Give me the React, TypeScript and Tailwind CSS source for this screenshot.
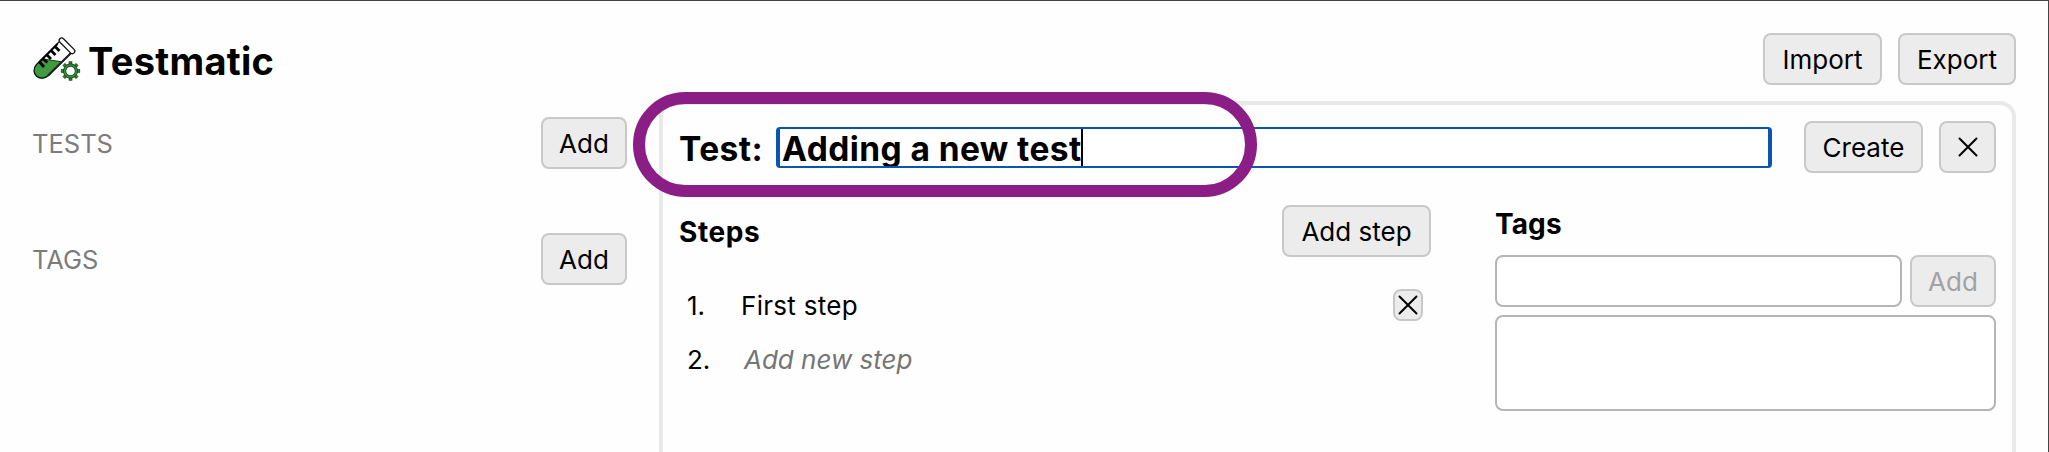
import React from "react";

const buttonBase =
  "flex h-[52px] shrink-0 items-center justify-center rounded-[8px] border-2 border-[#c8c8c8] bg-[#ececec] text-[26px] leading-none";

function Button({ className = "", children }: { className?: string; children: React.ReactNode }) {
  return <button className={`${buttonBase} ${className}`}>{children}</button>;
}

function Cross() {
  return (
    <svg className="size-[20px]" viewBox="0 0 20 20" fill="none" stroke="currentColor" strokeWidth="2" strokeLinecap="round">
      <path d="M1.5 1.5l17 17M18.5 1.5l-17 17" />
    </svg>
  );
}

function Logo() {
  return (
    <svg className="h-[44px] w-[48px] shrink-0" viewBox="0 0 48 44">
      <path d="M26 5L3.500 27.500C-4 36 8 47 16 39L39 15Z" fill="#fff" />
      <path d="M10 22l6 .8 12 2L16 38.500C8 47-4 37 3 28.500z" fill="#3f9b40" />
      <path d="M26 5L3.500 27.500C-4 36 7 46 15.500 38.500L38.500 15.500" fill="none" stroke="#111" strokeWidth="1.300" />
      <path d="M15 38.500L38 16" stroke="#222" strokeWidth="2" />
      <path d="M10.500 22l18 2.800" stroke="#17401a" strokeWidth="1" />
      <path d="M22.500 10l4 4M18 13.500l4.500 4.500M14 18l4 4M10 22l4.500 3.500M6.500 25l4.500 5" stroke="#000" strokeWidth="2.800" />
      <path d="M24.500 7L6 25.500" stroke="#000" strokeWidth="2" />
      <rect x="24" y="6.300" width="20" height="5" rx="2.500" transform="rotate(45 34 8.800)" fill="#fff" stroke="#111" strokeWidth="1.300" />
      <g transform="translate(37.500 34)">
        {[0, 45, 90, 135, 180, 225, 270, 315].map((a) => (
          <rect key={a} x="-1.500" y="-9.300" width="3" height="4" transform={`rotate(${a})`} fill="#2c7a30" stroke="#173f19" strokeWidth=".6" />
        ))}
        <circle r="5.900" fill="#fff" stroke="#173f19" strokeWidth="3.200" />
        <circle r="5.900" fill="none" stroke="#359139" strokeWidth="1.800" />
      </g>
    </svg>
  );
}

export default function App() {
  return (
    <div className="relative flex h-[452px] w-[2049px] flex-col overflow-hidden border-t border-r border-[#444] bg-[#fefefe] pl-[33px] pr-[32px] font-['Inter',sans-serif] text-[26px] text-black">
      <header className="flex h-[100px] shrink-0 justify-between pt-[32px]">
        <div className="flex h-[52px] items-center">
          <div className="flex h-[44px] items-center"><Logo /></div>
          <h1 className="ml-[7px] pt-[3px] text-[38px] leading-[44px] font-bold tracking-[0.3px]">Testmatic</h1>
        </div>
        <div className="flex gap-[16px]">
          <Button className="w-[119px] pt-[2px]">Import</Button>
          <Button className="w-[118px] pt-[2px]">Export</Button>
        </div>
      </header>

      <div className="flex min-h-0 flex-1">
        <aside className="flex w-[594px] shrink-0 flex-col gap-[64px] pt-[16px]">
          <div className="flex h-[52px] items-center justify-between text-[#7c7c7c]">
            <h2 className="-ml-px pt-[2px] text-[25.5px]">TESTS</h2>
            <Button className="w-[86px] pt-[2px] text-black">Add</Button>
          </div>
          <div className="flex h-[52px] items-center justify-between text-[#7c7c7c]">
            <h2 className="-ml-px pt-[2px] text-[25.5px]">TAGS</h2>
            <Button className="w-[86px] pt-[2px] text-black">Add</Button>
          </div>
        </aside>

        <main className="ml-[32px] flex min-w-0 flex-1 flex-col rounded-t-[16px] border-x-4 border-t-4 border-[#e9e9e9] px-[16px] pt-[16px]">
          <div className="flex h-[52px] shrink-0 items-center text-[33.5px] leading-none font-bold tracking-[0.42px]">
            <label className="w-[97px] pt-[5px]">Test:</label>
            <div className="mt-[1px] flex h-[41px] w-[996px] items-center overflow-hidden rounded-[4px] border-x-4 border-y-2 border-[#0a54b4] bg-white pl-[2px]">
              <span className="whitespace-nowrap pt-[5px]">Adding a new test</span>
              <span className="-ml-px h-[37px] w-[2px] bg-black" />
            </div>
            <Button className="ml-[32px] w-[119px] pt-[2px] font-normal tracking-normal">Create</Button>
            <Button className="ml-[16px] w-[57px]"><Cross /></Button>
          </div>

          <div className="mt-[32px] flex">
            <section className="w-[752px]">
              <div className="flex h-[52px] items-center justify-between">
                <h3 className="pt-[2px] text-[28px] font-bold tracking-[0.6px]">Steps</h3>
                <Button className="w-[149px] pt-[2px]">Add step</Button>
              </div>
              <ol className="mt-[21px] px-[8px]">
                <li className="flex h-[54px] items-center">
                  <span className="w-[54px]">1.</span>
                  <span className="flex-1 tracking-[0.3px]">First step</span>
                  <button className="flex h-[32px] w-[30px] items-center justify-center rounded-[8px] border-2 border-[#c8c8c8] bg-[#ececec]"><Cross /></button>
                </li>
                <li className="flex h-[54px] items-center">
                  <span className="w-[57px]">2.</span>
                  <span className="text-[#757575] italic">Add new step</span>
                </li>
              </ol>
            </section>

            <section className="ml-[64px] w-[501px]">
              <h3 className="flex h-[36px] items-center pt-px text-[28px] font-bold tracking-[0.1px]">Tags</h3>
              <div className="mt-[14px] flex gap-[8px]">
                <div className="h-[52px] w-[407px] rounded-[8px] border-2 border-[#b5b5b5] bg-white" />
                <Button className="w-[86px] pt-[2px] text-[#a2a2a2]">Add</Button>
              </div>
              <div className="mt-[8px] h-[96px] rounded-[8px] border-2 border-[#b5b5b5] bg-white" />
            </section>
          </div>
        </main>
      </div>

      <div className="pointer-events-none absolute top-[91px] left-[633px] h-[105px] w-[624px] rounded-[53px] border-[12px] border-[#8a1e86]" />
    </div>
  );
}
